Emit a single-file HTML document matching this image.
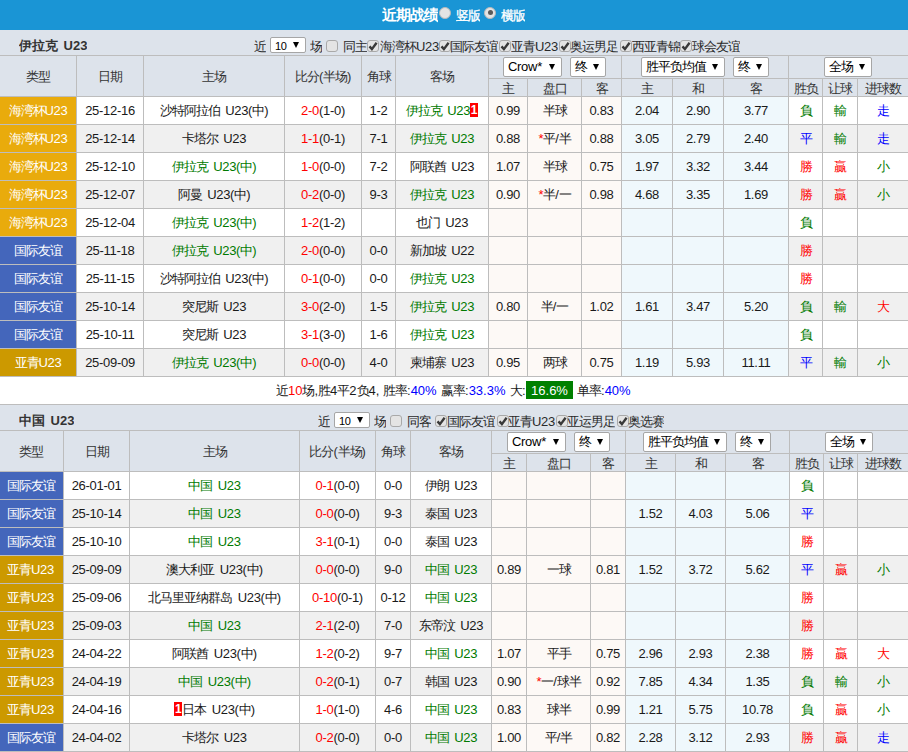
<!DOCTYPE html>
<html><head><meta charset="utf-8"><style>
html,body{margin:0;padding:0;}
body{width:908px;height:752px;overflow:hidden;position:relative;background:#fff;font-family:"Liberation Sans",sans-serif;font-size:13px;letter-spacing:-0.3px;word-spacing:2px;color:#1a1a1a;}
.c{letter-spacing:-1px}
.nt .c{letter-spacing:0}
.hd{padding-top:1px;box-sizing:border-box}
body>div{position:absolute;white-space:nowrap;overflow:hidden;}
.arr{position:absolute;width:0;height:0;border-left:3px solid transparent;border-right:3px solid transparent;border-top:6px solid #000}
.ck{font-size:10px;line-height:9px;display:block;text-align:center;color:#333}
.rc{background:#f00;color:#fff;font-weight:bold;display:inline-block;width:8px;height:14px;line-height:14px;text-align:center;vertical-align:1px;font-size:12px;letter-spacing:0}
.bl{color:#00f}
.gb{background:#008000;color:#fff;font-size:13px;padding:1px 4px;display:inline-block;line-height:17px}
</style></head><body>
<div style="left:0px;top:0px;width:908px;height:30px;background:#1a95d5"></div>
<div style="left:382px;top:6px;color:#fff;font-weight:bold;font-size:15px;line-height:18px"><span class="c">近期战绩</span></div>
<div style="left:439px;top:7px;width:12px;height:12px;border-radius:50%;border:1px solid #b9b9b9;box-sizing:border-box;background:#e4e4e4"></div>
<div style="left:456px;top:7px;color:#fff;font-size:13px;line-height:18px;-webkit-text-stroke:0.35px #fff"><span class="c">竖版</span></div>
<div style="left:484px;top:7px;width:12px;height:12px;border-radius:50%;border:1px solid #b9b9b9;box-sizing:border-box;background:#e4e4e4"><div style="position:absolute;left:3px;top:2px;width:5px;height:5px;border-radius:50%;background:#5a5a5a"></div></div>
<div style="left:501px;top:7px;color:#fff;font-size:13px;line-height:18px;-webkit-text-stroke:0.35px #fff"><span class="c">横版</span></div>
<div style="left:0px;top:30px;width:908px;height:25px;background:#dde3eb"></div>
<div style="left:0px;top:55px;width:908px;height:41px;background:#dde3eb"></div>
<div style="left:0px;top:55px;width:908px;height:1px;background:#bdbdbd"></div>
<div style="left:0px;top:96px;width:908px;height:1px;background:#bdbdbd"></div>
<div style="left:0px;top:56px;width:76px;height:40px;line-height:42px;text-align:center;color:#333"><span class="c">类型</span></div>
<div style="left:76px;top:55px;width:1px;height:41px;background:#bdbdbd"></div>
<div style="left:77px;top:56px;width:66px;height:40px;line-height:42px;text-align:center;color:#333"><span class="c">日期</span></div>
<div style="left:143px;top:55px;width:1px;height:41px;background:#bdbdbd"></div>
<div style="left:144px;top:56px;width:140px;height:40px;line-height:42px;text-align:center;color:#333"><span class="c">主场</span></div>
<div style="left:284px;top:55px;width:1px;height:41px;background:#bdbdbd"></div>
<div style="left:285px;top:56px;width:76px;height:40px;line-height:42px;text-align:center;color:#333"><span class="c">比分</span>(<span class="c">半场</span>)</div>
<div style="left:361px;top:55px;width:1px;height:41px;background:#bdbdbd"></div>
<div style="left:362px;top:56px;width:33px;height:40px;line-height:42px;text-align:center;color:#333"><span class="c">角球</span></div>
<div style="left:395px;top:55px;width:1px;height:41px;background:#bdbdbd"></div>
<div style="left:396px;top:56px;width:92px;height:40px;line-height:42px;text-align:center;color:#333"><span class="c">客场</span></div>
<div style="left:488px;top:55px;width:1px;height:41px;background:#bdbdbd"></div>
<div style="left:488px;top:78px;width:420px;height:1px;background:#bdbdbd"></div>
<div style="left:621px;top:55px;width:1px;height:41px;background:#bdbdbd"></div>
<div style="left:788px;top:55px;width:1px;height:41px;background:#bdbdbd"></div>
<div style="left:489px;top:79px;width:38px;height:17px;line-height:19px;text-align:center;color:#333"><span class="c">主</span></div>
<div style="left:527px;top:78px;width:1px;height:18px;background:#bdbdbd"></div>
<div style="left:528px;top:79px;width:53px;height:17px;line-height:19px;text-align:center;color:#333"><span class="c">盘口</span></div>
<div style="left:581px;top:78px;width:1px;height:18px;background:#bdbdbd"></div>
<div style="left:582px;top:79px;width:39px;height:17px;line-height:19px;text-align:center;color:#333"><span class="c">客</span></div>
<div style="left:621px;top:78px;width:1px;height:18px;background:#bdbdbd"></div>
<div style="left:622px;top:79px;width:50px;height:17px;line-height:19px;text-align:center;color:#333"><span class="c">主</span></div>
<div style="left:672px;top:78px;width:1px;height:18px;background:#bdbdbd"></div>
<div style="left:673px;top:79px;width:50px;height:17px;line-height:19px;text-align:center;color:#333"><span class="c">和</span></div>
<div style="left:723px;top:78px;width:1px;height:18px;background:#bdbdbd"></div>
<div style="left:724px;top:79px;width:64px;height:17px;line-height:19px;text-align:center;color:#333"><span class="c">客</span></div>
<div style="left:788px;top:78px;width:1px;height:18px;background:#bdbdbd"></div>
<div style="left:789px;top:79px;width:33px;height:17px;line-height:19px;text-align:center;color:#333"><span class="c">胜负</span></div>
<div style="left:822px;top:78px;width:1px;height:18px;background:#bdbdbd"></div>
<div style="left:823px;top:79px;width:34px;height:17px;line-height:19px;text-align:center;color:#333"><span class="c">让球</span></div>
<div style="left:857px;top:78px;width:1px;height:18px;background:#bdbdbd"></div>
<div style="left:858px;top:79px;width:50px;height:17px;line-height:19px;text-align:center;color:#333"><span class="c">进球数</span></div>
<div style="left:0px;top:97px;width:76px;height:27px;background:#e9ab0c;line-height:27px;text-align:center;color:#fff;"><span class="c">海湾杯</span>U23</div>
<div style="left:76px;top:96px;width:1px;height:28px;background:#bdbdbd"></div>
<div style="left:77px;top:97px;width:66px;height:27px;background:#fff;line-height:27px;text-align:center;color:#1a1a1a;">25-12-16</div>
<div style="left:143px;top:96px;width:1px;height:28px;background:#bdbdbd"></div>
<div style="left:144px;top:97px;width:140px;height:27px;background:#fff;line-height:27px;text-align:center;color:#1a1a1a;"><span class="c">沙特阿拉伯</span> U23(<span class="c">中</span>)</div>
<div style="left:284px;top:96px;width:1px;height:28px;background:#bdbdbd"></div>
<div style="left:285px;top:97px;width:76px;height:27px;background:#fff;line-height:27px;text-align:center;color:#1a1a1a;"><span style="color:#ff0000">2-0</span>(1-0)</div>
<div style="left:361px;top:96px;width:1px;height:28px;background:#bdbdbd"></div>
<div style="left:362px;top:97px;width:33px;height:27px;background:#fff;line-height:27px;text-align:center;color:#1a1a1a;">1-2</div>
<div style="left:395px;top:96px;width:1px;height:28px;background:#bdbdbd"></div>
<div style="left:396px;top:97px;width:92px;height:27px;background:#fff;line-height:27px;text-align:center;color:#007a00;"><span class="c">伊拉克</span> U23<b class="rc">1</b></div>
<div style="left:488px;top:96px;width:1px;height:28px;background:#bdbdbd"></div>
<div style="left:489px;top:97px;width:38px;height:27px;background:#fdf9f6;line-height:27px;text-align:center;color:#1a1a1a;">0.99</div>
<div style="left:527px;top:96px;width:1px;height:28px;background:#bdbdbd"></div>
<div style="left:528px;top:97px;width:53px;height:27px;background:#fdf9f6;line-height:27px;text-align:center;color:#1a1a1a;"><span class="c">半球</span></div>
<div style="left:581px;top:96px;width:1px;height:28px;background:#bdbdbd"></div>
<div style="left:582px;top:97px;width:39px;height:27px;background:#fdf9f6;line-height:27px;text-align:center;color:#1a1a1a;">0.83</div>
<div style="left:621px;top:96px;width:1px;height:28px;background:#bdbdbd"></div>
<div style="left:622px;top:97px;width:50px;height:27px;background:#eff8fc;line-height:27px;text-align:center;color:#1a1a1a;">2.04</div>
<div style="left:672px;top:96px;width:1px;height:28px;background:#bdbdbd"></div>
<div style="left:673px;top:97px;width:50px;height:27px;background:#eff8fc;line-height:27px;text-align:center;color:#1a1a1a;">2.90</div>
<div style="left:723px;top:96px;width:1px;height:28px;background:#bdbdbd"></div>
<div style="left:724px;top:97px;width:64px;height:27px;background:#eff8fc;line-height:27px;text-align:center;color:#1a1a1a;">3.77</div>
<div style="left:788px;top:96px;width:1px;height:28px;background:#bdbdbd"></div>
<div style="left:789px;top:97px;width:33px;height:27px;background:#fff;line-height:27px;text-align:center;color:#007a00;"><span class="c">負</span></div>
<div style="left:822px;top:96px;width:1px;height:28px;background:#bdbdbd"></div>
<div style="left:823px;top:97px;width:34px;height:27px;background:#fff;line-height:27px;text-align:center;color:#007a00;"><span class="c">輸</span></div>
<div style="left:857px;top:96px;width:1px;height:28px;background:#bdbdbd"></div>
<div style="left:858px;top:97px;width:50px;height:27px;background:#fff;line-height:27px;text-align:center;color:#0000ff;"><span class="c">走</span></div>
<div style="left:0px;top:124px;width:908px;height:1px;background:#bdbdbd"></div>
<div style="left:0px;top:125px;width:76px;height:27px;background:#e9ab0c;line-height:27px;text-align:center;color:#fff;"><span class="c">海湾杯</span>U23</div>
<div style="left:76px;top:124px;width:1px;height:28px;background:#bdbdbd"></div>
<div style="left:77px;top:125px;width:66px;height:27px;background:#f0f0f0;line-height:27px;text-align:center;color:#1a1a1a;">25-12-14</div>
<div style="left:143px;top:124px;width:1px;height:28px;background:#bdbdbd"></div>
<div style="left:144px;top:125px;width:140px;height:27px;background:#f0f0f0;line-height:27px;text-align:center;color:#1a1a1a;"><span class="c">卡塔尔</span> U23</div>
<div style="left:284px;top:124px;width:1px;height:28px;background:#bdbdbd"></div>
<div style="left:285px;top:125px;width:76px;height:27px;background:#f0f0f0;line-height:27px;text-align:center;color:#1a1a1a;"><span style="color:#ff0000">1-1</span>(0-1)</div>
<div style="left:361px;top:124px;width:1px;height:28px;background:#bdbdbd"></div>
<div style="left:362px;top:125px;width:33px;height:27px;background:#f0f0f0;line-height:27px;text-align:center;color:#1a1a1a;">7-1</div>
<div style="left:395px;top:124px;width:1px;height:28px;background:#bdbdbd"></div>
<div style="left:396px;top:125px;width:92px;height:27px;background:#f0f0f0;line-height:27px;text-align:center;color:#007a00;"><span class="c">伊拉克</span> U23</div>
<div style="left:488px;top:124px;width:1px;height:28px;background:#bdbdbd"></div>
<div style="left:489px;top:125px;width:38px;height:27px;background:#fdf9f6;line-height:27px;text-align:center;color:#1a1a1a;">0.88</div>
<div style="left:527px;top:124px;width:1px;height:28px;background:#bdbdbd"></div>
<div style="left:528px;top:125px;width:53px;height:27px;background:#fdf9f6;line-height:27px;text-align:center;color:#1a1a1a;"><span style="color:#ff0000">*</span><span class="c">平</span>/<span class="c">半</span></div>
<div style="left:581px;top:124px;width:1px;height:28px;background:#bdbdbd"></div>
<div style="left:582px;top:125px;width:39px;height:27px;background:#fdf9f6;line-height:27px;text-align:center;color:#1a1a1a;">0.88</div>
<div style="left:621px;top:124px;width:1px;height:28px;background:#bdbdbd"></div>
<div style="left:622px;top:125px;width:50px;height:27px;background:#eff8fc;line-height:27px;text-align:center;color:#1a1a1a;">3.05</div>
<div style="left:672px;top:124px;width:1px;height:28px;background:#bdbdbd"></div>
<div style="left:673px;top:125px;width:50px;height:27px;background:#eff8fc;line-height:27px;text-align:center;color:#1a1a1a;">2.79</div>
<div style="left:723px;top:124px;width:1px;height:28px;background:#bdbdbd"></div>
<div style="left:724px;top:125px;width:64px;height:27px;background:#eff8fc;line-height:27px;text-align:center;color:#1a1a1a;">2.40</div>
<div style="left:788px;top:124px;width:1px;height:28px;background:#bdbdbd"></div>
<div style="left:789px;top:125px;width:33px;height:27px;background:#f0f0f0;line-height:27px;text-align:center;color:#0000ff;"><span class="c">平</span></div>
<div style="left:822px;top:124px;width:1px;height:28px;background:#bdbdbd"></div>
<div style="left:823px;top:125px;width:34px;height:27px;background:#f0f0f0;line-height:27px;text-align:center;color:#007a00;"><span class="c">輸</span></div>
<div style="left:857px;top:124px;width:1px;height:28px;background:#bdbdbd"></div>
<div style="left:858px;top:125px;width:50px;height:27px;background:#f0f0f0;line-height:27px;text-align:center;color:#0000ff;"><span class="c">走</span></div>
<div style="left:0px;top:152px;width:908px;height:1px;background:#bdbdbd"></div>
<div style="left:0px;top:153px;width:76px;height:27px;background:#e9ab0c;line-height:27px;text-align:center;color:#fff;"><span class="c">海湾杯</span>U23</div>
<div style="left:76px;top:152px;width:1px;height:28px;background:#bdbdbd"></div>
<div style="left:77px;top:153px;width:66px;height:27px;background:#fff;line-height:27px;text-align:center;color:#1a1a1a;">25-12-10</div>
<div style="left:143px;top:152px;width:1px;height:28px;background:#bdbdbd"></div>
<div style="left:144px;top:153px;width:140px;height:27px;background:#fff;line-height:27px;text-align:center;color:#007a00;"><span class="c">伊拉克</span> U23(<span class="c">中</span>)</div>
<div style="left:284px;top:152px;width:1px;height:28px;background:#bdbdbd"></div>
<div style="left:285px;top:153px;width:76px;height:27px;background:#fff;line-height:27px;text-align:center;color:#1a1a1a;"><span style="color:#ff0000">1-0</span>(0-0)</div>
<div style="left:361px;top:152px;width:1px;height:28px;background:#bdbdbd"></div>
<div style="left:362px;top:153px;width:33px;height:27px;background:#fff;line-height:27px;text-align:center;color:#1a1a1a;">7-2</div>
<div style="left:395px;top:152px;width:1px;height:28px;background:#bdbdbd"></div>
<div style="left:396px;top:153px;width:92px;height:27px;background:#fff;line-height:27px;text-align:center;color:#1a1a1a;"><span class="c">阿联酋</span> U23</div>
<div style="left:488px;top:152px;width:1px;height:28px;background:#bdbdbd"></div>
<div style="left:489px;top:153px;width:38px;height:27px;background:#fdf9f6;line-height:27px;text-align:center;color:#1a1a1a;">1.07</div>
<div style="left:527px;top:152px;width:1px;height:28px;background:#bdbdbd"></div>
<div style="left:528px;top:153px;width:53px;height:27px;background:#fdf9f6;line-height:27px;text-align:center;color:#1a1a1a;"><span class="c">半球</span></div>
<div style="left:581px;top:152px;width:1px;height:28px;background:#bdbdbd"></div>
<div style="left:582px;top:153px;width:39px;height:27px;background:#fdf9f6;line-height:27px;text-align:center;color:#1a1a1a;">0.75</div>
<div style="left:621px;top:152px;width:1px;height:28px;background:#bdbdbd"></div>
<div style="left:622px;top:153px;width:50px;height:27px;background:#eff8fc;line-height:27px;text-align:center;color:#1a1a1a;">1.97</div>
<div style="left:672px;top:152px;width:1px;height:28px;background:#bdbdbd"></div>
<div style="left:673px;top:153px;width:50px;height:27px;background:#eff8fc;line-height:27px;text-align:center;color:#1a1a1a;">3.32</div>
<div style="left:723px;top:152px;width:1px;height:28px;background:#bdbdbd"></div>
<div style="left:724px;top:153px;width:64px;height:27px;background:#eff8fc;line-height:27px;text-align:center;color:#1a1a1a;">3.44</div>
<div style="left:788px;top:152px;width:1px;height:28px;background:#bdbdbd"></div>
<div style="left:789px;top:153px;width:33px;height:27px;background:#fff;line-height:27px;text-align:center;color:#ff0000;"><span class="c">勝</span></div>
<div style="left:822px;top:152px;width:1px;height:28px;background:#bdbdbd"></div>
<div style="left:823px;top:153px;width:34px;height:27px;background:#fff;line-height:27px;text-align:center;color:#ff0000;"><span class="c">贏</span></div>
<div style="left:857px;top:152px;width:1px;height:28px;background:#bdbdbd"></div>
<div style="left:858px;top:153px;width:50px;height:27px;background:#fff;line-height:27px;text-align:center;color:#007a00;"><span class="c">小</span></div>
<div style="left:0px;top:180px;width:908px;height:1px;background:#bdbdbd"></div>
<div style="left:0px;top:181px;width:76px;height:27px;background:#e9ab0c;line-height:27px;text-align:center;color:#fff;"><span class="c">海湾杯</span>U23</div>
<div style="left:76px;top:180px;width:1px;height:28px;background:#bdbdbd"></div>
<div style="left:77px;top:181px;width:66px;height:27px;background:#f0f0f0;line-height:27px;text-align:center;color:#1a1a1a;">25-12-07</div>
<div style="left:143px;top:180px;width:1px;height:28px;background:#bdbdbd"></div>
<div style="left:144px;top:181px;width:140px;height:27px;background:#f0f0f0;line-height:27px;text-align:center;color:#1a1a1a;"><span class="c">阿曼</span> U23(<span class="c">中</span>)</div>
<div style="left:284px;top:180px;width:1px;height:28px;background:#bdbdbd"></div>
<div style="left:285px;top:181px;width:76px;height:27px;background:#f0f0f0;line-height:27px;text-align:center;color:#1a1a1a;"><span style="color:#ff0000">0-2</span>(0-0)</div>
<div style="left:361px;top:180px;width:1px;height:28px;background:#bdbdbd"></div>
<div style="left:362px;top:181px;width:33px;height:27px;background:#f0f0f0;line-height:27px;text-align:center;color:#1a1a1a;">9-3</div>
<div style="left:395px;top:180px;width:1px;height:28px;background:#bdbdbd"></div>
<div style="left:396px;top:181px;width:92px;height:27px;background:#f0f0f0;line-height:27px;text-align:center;color:#007a00;"><span class="c">伊拉克</span> U23</div>
<div style="left:488px;top:180px;width:1px;height:28px;background:#bdbdbd"></div>
<div style="left:489px;top:181px;width:38px;height:27px;background:#fdf9f6;line-height:27px;text-align:center;color:#1a1a1a;">0.90</div>
<div style="left:527px;top:180px;width:1px;height:28px;background:#bdbdbd"></div>
<div style="left:528px;top:181px;width:53px;height:27px;background:#fdf9f6;line-height:27px;text-align:center;color:#1a1a1a;"><span style="color:#ff0000">*</span><span class="c">半</span>/<span class="c">一</span></div>
<div style="left:581px;top:180px;width:1px;height:28px;background:#bdbdbd"></div>
<div style="left:582px;top:181px;width:39px;height:27px;background:#fdf9f6;line-height:27px;text-align:center;color:#1a1a1a;">0.98</div>
<div style="left:621px;top:180px;width:1px;height:28px;background:#bdbdbd"></div>
<div style="left:622px;top:181px;width:50px;height:27px;background:#eff8fc;line-height:27px;text-align:center;color:#1a1a1a;">4.68</div>
<div style="left:672px;top:180px;width:1px;height:28px;background:#bdbdbd"></div>
<div style="left:673px;top:181px;width:50px;height:27px;background:#eff8fc;line-height:27px;text-align:center;color:#1a1a1a;">3.35</div>
<div style="left:723px;top:180px;width:1px;height:28px;background:#bdbdbd"></div>
<div style="left:724px;top:181px;width:64px;height:27px;background:#eff8fc;line-height:27px;text-align:center;color:#1a1a1a;">1.69</div>
<div style="left:788px;top:180px;width:1px;height:28px;background:#bdbdbd"></div>
<div style="left:789px;top:181px;width:33px;height:27px;background:#f0f0f0;line-height:27px;text-align:center;color:#ff0000;"><span class="c">勝</span></div>
<div style="left:822px;top:180px;width:1px;height:28px;background:#bdbdbd"></div>
<div style="left:823px;top:181px;width:34px;height:27px;background:#f0f0f0;line-height:27px;text-align:center;color:#ff0000;"><span class="c">贏</span></div>
<div style="left:857px;top:180px;width:1px;height:28px;background:#bdbdbd"></div>
<div style="left:858px;top:181px;width:50px;height:27px;background:#f0f0f0;line-height:27px;text-align:center;color:#007a00;"><span class="c">小</span></div>
<div style="left:0px;top:208px;width:908px;height:1px;background:#bdbdbd"></div>
<div style="left:0px;top:209px;width:76px;height:27px;background:#e9ab0c;line-height:27px;text-align:center;color:#fff;"><span class="c">海湾杯</span>U23</div>
<div style="left:76px;top:208px;width:1px;height:28px;background:#bdbdbd"></div>
<div style="left:77px;top:209px;width:66px;height:27px;background:#fff;line-height:27px;text-align:center;color:#1a1a1a;">25-12-04</div>
<div style="left:143px;top:208px;width:1px;height:28px;background:#bdbdbd"></div>
<div style="left:144px;top:209px;width:140px;height:27px;background:#fff;line-height:27px;text-align:center;color:#007a00;"><span class="c">伊拉克</span> U23(<span class="c">中</span>)</div>
<div style="left:284px;top:208px;width:1px;height:28px;background:#bdbdbd"></div>
<div style="left:285px;top:209px;width:76px;height:27px;background:#fff;line-height:27px;text-align:center;color:#1a1a1a;"><span style="color:#ff0000">1-2</span>(1-2)</div>
<div style="left:361px;top:208px;width:1px;height:28px;background:#bdbdbd"></div>
<div style="left:362px;top:209px;width:33px;height:27px;background:#fff;line-height:27px;text-align:center;color:#1a1a1a;"></div>
<div style="left:395px;top:208px;width:1px;height:28px;background:#bdbdbd"></div>
<div style="left:396px;top:209px;width:92px;height:27px;background:#fff;line-height:27px;text-align:center;color:#1a1a1a;"><span class="c">也门</span> U23</div>
<div style="left:488px;top:208px;width:1px;height:28px;background:#bdbdbd"></div>
<div style="left:489px;top:209px;width:38px;height:27px;background:#fdf9f6;line-height:27px;text-align:center;color:#1a1a1a;"></div>
<div style="left:527px;top:208px;width:1px;height:28px;background:#bdbdbd"></div>
<div style="left:528px;top:209px;width:53px;height:27px;background:#fdf9f6;line-height:27px;text-align:center;color:#1a1a1a;"></div>
<div style="left:581px;top:208px;width:1px;height:28px;background:#bdbdbd"></div>
<div style="left:582px;top:209px;width:39px;height:27px;background:#fdf9f6;line-height:27px;text-align:center;color:#1a1a1a;"></div>
<div style="left:621px;top:208px;width:1px;height:28px;background:#bdbdbd"></div>
<div style="left:622px;top:209px;width:50px;height:27px;background:#eff8fc;line-height:27px;text-align:center;color:#1a1a1a;"></div>
<div style="left:672px;top:208px;width:1px;height:28px;background:#bdbdbd"></div>
<div style="left:673px;top:209px;width:50px;height:27px;background:#eff8fc;line-height:27px;text-align:center;color:#1a1a1a;"></div>
<div style="left:723px;top:208px;width:1px;height:28px;background:#bdbdbd"></div>
<div style="left:724px;top:209px;width:64px;height:27px;background:#eff8fc;line-height:27px;text-align:center;color:#1a1a1a;"></div>
<div style="left:788px;top:208px;width:1px;height:28px;background:#bdbdbd"></div>
<div style="left:789px;top:209px;width:33px;height:27px;background:#fff;line-height:27px;text-align:center;color:#007a00;"><span class="c">負</span></div>
<div style="left:822px;top:208px;width:1px;height:28px;background:#bdbdbd"></div>
<div style="left:823px;top:209px;width:34px;height:27px;background:#fff;line-height:27px;text-align:center;color:#1a1a1a;"></div>
<div style="left:857px;top:208px;width:1px;height:28px;background:#bdbdbd"></div>
<div style="left:858px;top:209px;width:50px;height:27px;background:#fff;line-height:27px;text-align:center;color:#1a1a1a;"></div>
<div style="left:0px;top:236px;width:908px;height:1px;background:#bdbdbd"></div>
<div style="left:0px;top:237px;width:76px;height:27px;background:#4466bb;line-height:27px;text-align:center;color:#fff;"><span class="c">国际友谊</span></div>
<div style="left:76px;top:236px;width:1px;height:28px;background:#bdbdbd"></div>
<div style="left:77px;top:237px;width:66px;height:27px;background:#f0f0f0;line-height:27px;text-align:center;color:#1a1a1a;">25-11-18</div>
<div style="left:143px;top:236px;width:1px;height:28px;background:#bdbdbd"></div>
<div style="left:144px;top:237px;width:140px;height:27px;background:#f0f0f0;line-height:27px;text-align:center;color:#007a00;"><span class="c">伊拉克</span> U23(<span class="c">中</span>)</div>
<div style="left:284px;top:236px;width:1px;height:28px;background:#bdbdbd"></div>
<div style="left:285px;top:237px;width:76px;height:27px;background:#f0f0f0;line-height:27px;text-align:center;color:#1a1a1a;"><span style="color:#ff0000">2-0</span>(0-0)</div>
<div style="left:361px;top:236px;width:1px;height:28px;background:#bdbdbd"></div>
<div style="left:362px;top:237px;width:33px;height:27px;background:#f0f0f0;line-height:27px;text-align:center;color:#1a1a1a;">0-0</div>
<div style="left:395px;top:236px;width:1px;height:28px;background:#bdbdbd"></div>
<div style="left:396px;top:237px;width:92px;height:27px;background:#f0f0f0;line-height:27px;text-align:center;color:#1a1a1a;"><span class="c">新加坡</span> U22</div>
<div style="left:488px;top:236px;width:1px;height:28px;background:#bdbdbd"></div>
<div style="left:489px;top:237px;width:38px;height:27px;background:#fdf9f6;line-height:27px;text-align:center;color:#1a1a1a;"></div>
<div style="left:527px;top:236px;width:1px;height:28px;background:#bdbdbd"></div>
<div style="left:528px;top:237px;width:53px;height:27px;background:#fdf9f6;line-height:27px;text-align:center;color:#1a1a1a;"></div>
<div style="left:581px;top:236px;width:1px;height:28px;background:#bdbdbd"></div>
<div style="left:582px;top:237px;width:39px;height:27px;background:#fdf9f6;line-height:27px;text-align:center;color:#1a1a1a;"></div>
<div style="left:621px;top:236px;width:1px;height:28px;background:#bdbdbd"></div>
<div style="left:622px;top:237px;width:50px;height:27px;background:#eff8fc;line-height:27px;text-align:center;color:#1a1a1a;"></div>
<div style="left:672px;top:236px;width:1px;height:28px;background:#bdbdbd"></div>
<div style="left:673px;top:237px;width:50px;height:27px;background:#eff8fc;line-height:27px;text-align:center;color:#1a1a1a;"></div>
<div style="left:723px;top:236px;width:1px;height:28px;background:#bdbdbd"></div>
<div style="left:724px;top:237px;width:64px;height:27px;background:#eff8fc;line-height:27px;text-align:center;color:#1a1a1a;"></div>
<div style="left:788px;top:236px;width:1px;height:28px;background:#bdbdbd"></div>
<div style="left:789px;top:237px;width:33px;height:27px;background:#f0f0f0;line-height:27px;text-align:center;color:#ff0000;"><span class="c">勝</span></div>
<div style="left:822px;top:236px;width:1px;height:28px;background:#bdbdbd"></div>
<div style="left:823px;top:237px;width:34px;height:27px;background:#f0f0f0;line-height:27px;text-align:center;color:#1a1a1a;"></div>
<div style="left:857px;top:236px;width:1px;height:28px;background:#bdbdbd"></div>
<div style="left:858px;top:237px;width:50px;height:27px;background:#f0f0f0;line-height:27px;text-align:center;color:#1a1a1a;"></div>
<div style="left:0px;top:264px;width:908px;height:1px;background:#bdbdbd"></div>
<div style="left:0px;top:265px;width:76px;height:27px;background:#4466bb;line-height:27px;text-align:center;color:#fff;"><span class="c">国际友谊</span></div>
<div style="left:76px;top:264px;width:1px;height:28px;background:#bdbdbd"></div>
<div style="left:77px;top:265px;width:66px;height:27px;background:#fff;line-height:27px;text-align:center;color:#1a1a1a;">25-11-15</div>
<div style="left:143px;top:264px;width:1px;height:28px;background:#bdbdbd"></div>
<div style="left:144px;top:265px;width:140px;height:27px;background:#fff;line-height:27px;text-align:center;color:#1a1a1a;"><span class="c">沙特阿拉伯</span> U23(<span class="c">中</span>)</div>
<div style="left:284px;top:264px;width:1px;height:28px;background:#bdbdbd"></div>
<div style="left:285px;top:265px;width:76px;height:27px;background:#fff;line-height:27px;text-align:center;color:#1a1a1a;"><span style="color:#ff0000">0-1</span>(0-0)</div>
<div style="left:361px;top:264px;width:1px;height:28px;background:#bdbdbd"></div>
<div style="left:362px;top:265px;width:33px;height:27px;background:#fff;line-height:27px;text-align:center;color:#1a1a1a;">0-0</div>
<div style="left:395px;top:264px;width:1px;height:28px;background:#bdbdbd"></div>
<div style="left:396px;top:265px;width:92px;height:27px;background:#fff;line-height:27px;text-align:center;color:#007a00;"><span class="c">伊拉克</span> U23</div>
<div style="left:488px;top:264px;width:1px;height:28px;background:#bdbdbd"></div>
<div style="left:489px;top:265px;width:38px;height:27px;background:#fdf9f6;line-height:27px;text-align:center;color:#1a1a1a;"></div>
<div style="left:527px;top:264px;width:1px;height:28px;background:#bdbdbd"></div>
<div style="left:528px;top:265px;width:53px;height:27px;background:#fdf9f6;line-height:27px;text-align:center;color:#1a1a1a;"></div>
<div style="left:581px;top:264px;width:1px;height:28px;background:#bdbdbd"></div>
<div style="left:582px;top:265px;width:39px;height:27px;background:#fdf9f6;line-height:27px;text-align:center;color:#1a1a1a;"></div>
<div style="left:621px;top:264px;width:1px;height:28px;background:#bdbdbd"></div>
<div style="left:622px;top:265px;width:50px;height:27px;background:#eff8fc;line-height:27px;text-align:center;color:#1a1a1a;"></div>
<div style="left:672px;top:264px;width:1px;height:28px;background:#bdbdbd"></div>
<div style="left:673px;top:265px;width:50px;height:27px;background:#eff8fc;line-height:27px;text-align:center;color:#1a1a1a;"></div>
<div style="left:723px;top:264px;width:1px;height:28px;background:#bdbdbd"></div>
<div style="left:724px;top:265px;width:64px;height:27px;background:#eff8fc;line-height:27px;text-align:center;color:#1a1a1a;"></div>
<div style="left:788px;top:264px;width:1px;height:28px;background:#bdbdbd"></div>
<div style="left:789px;top:265px;width:33px;height:27px;background:#fff;line-height:27px;text-align:center;color:#ff0000;"><span class="c">勝</span></div>
<div style="left:822px;top:264px;width:1px;height:28px;background:#bdbdbd"></div>
<div style="left:823px;top:265px;width:34px;height:27px;background:#fff;line-height:27px;text-align:center;color:#1a1a1a;"></div>
<div style="left:857px;top:264px;width:1px;height:28px;background:#bdbdbd"></div>
<div style="left:858px;top:265px;width:50px;height:27px;background:#fff;line-height:27px;text-align:center;color:#1a1a1a;"></div>
<div style="left:0px;top:292px;width:908px;height:1px;background:#bdbdbd"></div>
<div style="left:0px;top:293px;width:76px;height:27px;background:#4466bb;line-height:27px;text-align:center;color:#fff;"><span class="c">国际友谊</span></div>
<div style="left:76px;top:292px;width:1px;height:28px;background:#bdbdbd"></div>
<div style="left:77px;top:293px;width:66px;height:27px;background:#f0f0f0;line-height:27px;text-align:center;color:#1a1a1a;">25-10-14</div>
<div style="left:143px;top:292px;width:1px;height:28px;background:#bdbdbd"></div>
<div style="left:144px;top:293px;width:140px;height:27px;background:#f0f0f0;line-height:27px;text-align:center;color:#1a1a1a;"><span class="c">突尼斯</span> U23</div>
<div style="left:284px;top:292px;width:1px;height:28px;background:#bdbdbd"></div>
<div style="left:285px;top:293px;width:76px;height:27px;background:#f0f0f0;line-height:27px;text-align:center;color:#1a1a1a;"><span style="color:#ff0000">3-0</span>(2-0)</div>
<div style="left:361px;top:292px;width:1px;height:28px;background:#bdbdbd"></div>
<div style="left:362px;top:293px;width:33px;height:27px;background:#f0f0f0;line-height:27px;text-align:center;color:#1a1a1a;">1-5</div>
<div style="left:395px;top:292px;width:1px;height:28px;background:#bdbdbd"></div>
<div style="left:396px;top:293px;width:92px;height:27px;background:#f0f0f0;line-height:27px;text-align:center;color:#007a00;"><span class="c">伊拉克</span> U23</div>
<div style="left:488px;top:292px;width:1px;height:28px;background:#bdbdbd"></div>
<div style="left:489px;top:293px;width:38px;height:27px;background:#fdf9f6;line-height:27px;text-align:center;color:#1a1a1a;">0.80</div>
<div style="left:527px;top:292px;width:1px;height:28px;background:#bdbdbd"></div>
<div style="left:528px;top:293px;width:53px;height:27px;background:#fdf9f6;line-height:27px;text-align:center;color:#1a1a1a;"><span class="c">半</span>/<span class="c">一</span></div>
<div style="left:581px;top:292px;width:1px;height:28px;background:#bdbdbd"></div>
<div style="left:582px;top:293px;width:39px;height:27px;background:#fdf9f6;line-height:27px;text-align:center;color:#1a1a1a;">1.02</div>
<div style="left:621px;top:292px;width:1px;height:28px;background:#bdbdbd"></div>
<div style="left:622px;top:293px;width:50px;height:27px;background:#eff8fc;line-height:27px;text-align:center;color:#1a1a1a;">1.61</div>
<div style="left:672px;top:292px;width:1px;height:28px;background:#bdbdbd"></div>
<div style="left:673px;top:293px;width:50px;height:27px;background:#eff8fc;line-height:27px;text-align:center;color:#1a1a1a;">3.47</div>
<div style="left:723px;top:292px;width:1px;height:28px;background:#bdbdbd"></div>
<div style="left:724px;top:293px;width:64px;height:27px;background:#eff8fc;line-height:27px;text-align:center;color:#1a1a1a;">5.20</div>
<div style="left:788px;top:292px;width:1px;height:28px;background:#bdbdbd"></div>
<div style="left:789px;top:293px;width:33px;height:27px;background:#f0f0f0;line-height:27px;text-align:center;color:#007a00;"><span class="c">負</span></div>
<div style="left:822px;top:292px;width:1px;height:28px;background:#bdbdbd"></div>
<div style="left:823px;top:293px;width:34px;height:27px;background:#f0f0f0;line-height:27px;text-align:center;color:#007a00;"><span class="c">輸</span></div>
<div style="left:857px;top:292px;width:1px;height:28px;background:#bdbdbd"></div>
<div style="left:858px;top:293px;width:50px;height:27px;background:#f0f0f0;line-height:27px;text-align:center;color:#ff0000;"><span class="c">大</span></div>
<div style="left:0px;top:320px;width:908px;height:1px;background:#bdbdbd"></div>
<div style="left:0px;top:321px;width:76px;height:27px;background:#4466bb;line-height:27px;text-align:center;color:#fff;"><span class="c">国际友谊</span></div>
<div style="left:76px;top:320px;width:1px;height:28px;background:#bdbdbd"></div>
<div style="left:77px;top:321px;width:66px;height:27px;background:#fff;line-height:27px;text-align:center;color:#1a1a1a;">25-10-11</div>
<div style="left:143px;top:320px;width:1px;height:28px;background:#bdbdbd"></div>
<div style="left:144px;top:321px;width:140px;height:27px;background:#fff;line-height:27px;text-align:center;color:#1a1a1a;"><span class="c">突尼斯</span> U23</div>
<div style="left:284px;top:320px;width:1px;height:28px;background:#bdbdbd"></div>
<div style="left:285px;top:321px;width:76px;height:27px;background:#fff;line-height:27px;text-align:center;color:#1a1a1a;"><span style="color:#ff0000">3-1</span>(3-0)</div>
<div style="left:361px;top:320px;width:1px;height:28px;background:#bdbdbd"></div>
<div style="left:362px;top:321px;width:33px;height:27px;background:#fff;line-height:27px;text-align:center;color:#1a1a1a;">1-6</div>
<div style="left:395px;top:320px;width:1px;height:28px;background:#bdbdbd"></div>
<div style="left:396px;top:321px;width:92px;height:27px;background:#fff;line-height:27px;text-align:center;color:#007a00;"><span class="c">伊拉克</span> U23</div>
<div style="left:488px;top:320px;width:1px;height:28px;background:#bdbdbd"></div>
<div style="left:489px;top:321px;width:38px;height:27px;background:#fdf9f6;line-height:27px;text-align:center;color:#1a1a1a;"></div>
<div style="left:527px;top:320px;width:1px;height:28px;background:#bdbdbd"></div>
<div style="left:528px;top:321px;width:53px;height:27px;background:#fdf9f6;line-height:27px;text-align:center;color:#1a1a1a;"></div>
<div style="left:581px;top:320px;width:1px;height:28px;background:#bdbdbd"></div>
<div style="left:582px;top:321px;width:39px;height:27px;background:#fdf9f6;line-height:27px;text-align:center;color:#1a1a1a;"></div>
<div style="left:621px;top:320px;width:1px;height:28px;background:#bdbdbd"></div>
<div style="left:622px;top:321px;width:50px;height:27px;background:#eff8fc;line-height:27px;text-align:center;color:#1a1a1a;"></div>
<div style="left:672px;top:320px;width:1px;height:28px;background:#bdbdbd"></div>
<div style="left:673px;top:321px;width:50px;height:27px;background:#eff8fc;line-height:27px;text-align:center;color:#1a1a1a;"></div>
<div style="left:723px;top:320px;width:1px;height:28px;background:#bdbdbd"></div>
<div style="left:724px;top:321px;width:64px;height:27px;background:#eff8fc;line-height:27px;text-align:center;color:#1a1a1a;"></div>
<div style="left:788px;top:320px;width:1px;height:28px;background:#bdbdbd"></div>
<div style="left:789px;top:321px;width:33px;height:27px;background:#fff;line-height:27px;text-align:center;color:#007a00;"><span class="c">負</span></div>
<div style="left:822px;top:320px;width:1px;height:28px;background:#bdbdbd"></div>
<div style="left:823px;top:321px;width:34px;height:27px;background:#fff;line-height:27px;text-align:center;color:#1a1a1a;"></div>
<div style="left:857px;top:320px;width:1px;height:28px;background:#bdbdbd"></div>
<div style="left:858px;top:321px;width:50px;height:27px;background:#fff;line-height:27px;text-align:center;color:#1a1a1a;"></div>
<div style="left:0px;top:348px;width:908px;height:1px;background:#bdbdbd"></div>
<div style="left:0px;top:349px;width:76px;height:27px;background:#cc9900;line-height:27px;text-align:center;color:#fff;"><span class="c">亚青</span>U23</div>
<div style="left:76px;top:348px;width:1px;height:28px;background:#bdbdbd"></div>
<div style="left:77px;top:349px;width:66px;height:27px;background:#f0f0f0;line-height:27px;text-align:center;color:#1a1a1a;">25-09-09</div>
<div style="left:143px;top:348px;width:1px;height:28px;background:#bdbdbd"></div>
<div style="left:144px;top:349px;width:140px;height:27px;background:#f0f0f0;line-height:27px;text-align:center;color:#007a00;"><span class="c">伊拉克</span> U23(<span class="c">中</span>)</div>
<div style="left:284px;top:348px;width:1px;height:28px;background:#bdbdbd"></div>
<div style="left:285px;top:349px;width:76px;height:27px;background:#f0f0f0;line-height:27px;text-align:center;color:#1a1a1a;"><span style="color:#ff0000">0-0</span>(0-0)</div>
<div style="left:361px;top:348px;width:1px;height:28px;background:#bdbdbd"></div>
<div style="left:362px;top:349px;width:33px;height:27px;background:#f0f0f0;line-height:27px;text-align:center;color:#1a1a1a;">4-0</div>
<div style="left:395px;top:348px;width:1px;height:28px;background:#bdbdbd"></div>
<div style="left:396px;top:349px;width:92px;height:27px;background:#f0f0f0;line-height:27px;text-align:center;color:#1a1a1a;"><span class="c">柬埔寨</span> U23</div>
<div style="left:488px;top:348px;width:1px;height:28px;background:#bdbdbd"></div>
<div style="left:489px;top:349px;width:38px;height:27px;background:#fdf9f6;line-height:27px;text-align:center;color:#1a1a1a;">0.95</div>
<div style="left:527px;top:348px;width:1px;height:28px;background:#bdbdbd"></div>
<div style="left:528px;top:349px;width:53px;height:27px;background:#fdf9f6;line-height:27px;text-align:center;color:#1a1a1a;"><span class="c">两球</span></div>
<div style="left:581px;top:348px;width:1px;height:28px;background:#bdbdbd"></div>
<div style="left:582px;top:349px;width:39px;height:27px;background:#fdf9f6;line-height:27px;text-align:center;color:#1a1a1a;">0.75</div>
<div style="left:621px;top:348px;width:1px;height:28px;background:#bdbdbd"></div>
<div style="left:622px;top:349px;width:50px;height:27px;background:#eff8fc;line-height:27px;text-align:center;color:#1a1a1a;">1.19</div>
<div style="left:672px;top:348px;width:1px;height:28px;background:#bdbdbd"></div>
<div style="left:673px;top:349px;width:50px;height:27px;background:#eff8fc;line-height:27px;text-align:center;color:#1a1a1a;">5.93</div>
<div style="left:723px;top:348px;width:1px;height:28px;background:#bdbdbd"></div>
<div style="left:724px;top:349px;width:64px;height:27px;background:#eff8fc;line-height:27px;text-align:center;color:#1a1a1a;">11.11</div>
<div style="left:788px;top:348px;width:1px;height:28px;background:#bdbdbd"></div>
<div style="left:789px;top:349px;width:33px;height:27px;background:#f0f0f0;line-height:27px;text-align:center;color:#0000ff;"><span class="c">平</span></div>
<div style="left:822px;top:348px;width:1px;height:28px;background:#bdbdbd"></div>
<div style="left:823px;top:349px;width:34px;height:27px;background:#f0f0f0;line-height:27px;text-align:center;color:#007a00;"><span class="c">輸</span></div>
<div style="left:857px;top:348px;width:1px;height:28px;background:#bdbdbd"></div>
<div style="left:858px;top:349px;width:50px;height:27px;background:#f0f0f0;line-height:27px;text-align:center;color:#007a00;"><span class="c">小</span></div>
<div style="left:0px;top:376px;width:908px;height:1px;background:#bdbdbd"></div>
<div class="nt" style="left:19px;top:38px;font-weight:bold;font-size:13px;line-height:16px;color:#333;letter-spacing:0"><span class="c">伊拉克</span> U23</div>
<div style="left:254px;top:39px;line-height:16px;color:#2a2a2a"><span class="c">近</span></div>
<div style="left:270px;top:37px;width:36px;height:16px;background:#fff;border:1px solid #a6a6a6;border-radius:2px;box-sizing:border-box;line-height:17px;padding-left:4px;font-size:11px;color:#000">10<span class="arr" style="left:22px;top:4px"></span></div>
<div style="left:310px;top:39px;line-height:16px;color:#2a2a2a"><span class="c">场</span></div>
<div style="left:326px;top:40px;width:12px;height:12px;background:#e4e4e4;border:1px solid #a9a9a9;border-radius:3px;box-sizing:border-box;"></div>
<div style="left:343px;top:39px;line-height:16px;color:#2a2a2a"><span class="c">同主</span></div>
<div style="left:367px;top:40px;width:12px;height:12px;background:#e4e4e4;border:1px solid #a9a9a9;border-radius:3px;box-sizing:border-box;"><svg width="10" height="10" style="position:absolute;left:0;top:0"><path d="M1.5 5.4 L3.9 8.1 L8.6 1.8" fill="none" stroke="#3a3a3a" stroke-width="2.4"/></svg></div>
<div style="left:380px;top:39px;line-height:16px;color:#2a2a2a"><span class="c">海湾杯</span>U23</div>
<div style="left:439px;top:40px;width:12px;height:12px;background:#e4e4e4;border:1px solid #a9a9a9;border-radius:3px;box-sizing:border-box;"><svg width="10" height="10" style="position:absolute;left:0;top:0"><path d="M1.5 5.4 L3.9 8.1 L8.6 1.8" fill="none" stroke="#3a3a3a" stroke-width="2.4"/></svg></div>
<div style="left:450px;top:39px;line-height:16px;color:#2a2a2a"><span class="c">国际友谊</span></div>
<div style="left:499px;top:40px;width:12px;height:12px;background:#e4e4e4;border:1px solid #a9a9a9;border-radius:3px;box-sizing:border-box;"><svg width="10" height="10" style="position:absolute;left:0;top:0"><path d="M1.5 5.4 L3.9 8.1 L8.6 1.8" fill="none" stroke="#3a3a3a" stroke-width="2.4"/></svg></div>
<div style="left:511px;top:39px;line-height:16px;color:#2a2a2a"><span class="c">亚青</span>U23</div>
<div style="left:559px;top:40px;width:12px;height:12px;background:#e4e4e4;border:1px solid #a9a9a9;border-radius:3px;box-sizing:border-box;"><svg width="10" height="10" style="position:absolute;left:0;top:0"><path d="M1.5 5.4 L3.9 8.1 L8.6 1.8" fill="none" stroke="#3a3a3a" stroke-width="2.4"/></svg></div>
<div style="left:570px;top:39px;line-height:16px;color:#2a2a2a"><span class="c">奥运男足</span></div>
<div style="left:620px;top:40px;width:12px;height:12px;background:#e4e4e4;border:1px solid #a9a9a9;border-radius:3px;box-sizing:border-box;"><svg width="10" height="10" style="position:absolute;left:0;top:0"><path d="M1.5 5.4 L3.9 8.1 L8.6 1.8" fill="none" stroke="#3a3a3a" stroke-width="2.4"/></svg></div>
<div style="left:632px;top:39px;line-height:16px;color:#2a2a2a"><span class="c">西亚青锦</span></div>
<div style="left:680px;top:40px;width:12px;height:12px;background:#e4e4e4;border:1px solid #a9a9a9;border-radius:3px;box-sizing:border-box;"><svg width="10" height="10" style="position:absolute;left:0;top:0"><path d="M1.5 5.4 L3.9 8.1 L8.6 1.8" fill="none" stroke="#3a3a3a" stroke-width="2.4"/></svg></div>
<div style="left:692px;top:39px;line-height:16px;color:#2a2a2a"><span class="c">球会友谊</span></div>
<div style="left:0px;top:405px;width:908px;height:25px;background:#dde3eb"></div>
<div style="left:0px;top:430px;width:908px;height:41px;background:#dde3eb"></div>
<div style="left:0px;top:430px;width:908px;height:1px;background:#bdbdbd"></div>
<div style="left:0px;top:471px;width:908px;height:1px;background:#bdbdbd"></div>
<div style="left:-2px;top:431px;width:65px;height:40px;line-height:42px;text-align:center;color:#333"><span class="c">类型</span></div>
<div style="left:63px;top:430px;width:1px;height:41px;background:#bdbdbd"></div>
<div style="left:64px;top:431px;width:65px;height:40px;line-height:42px;text-align:center;color:#333"><span class="c">日期</span></div>
<div style="left:129px;top:430px;width:1px;height:41px;background:#bdbdbd"></div>
<div style="left:130px;top:431px;width:169px;height:40px;line-height:42px;text-align:center;color:#333"><span class="c">主场</span></div>
<div style="left:299px;top:430px;width:1px;height:41px;background:#bdbdbd"></div>
<div style="left:300px;top:431px;width:75px;height:40px;line-height:42px;text-align:center;color:#333"><span class="c">比分</span>(<span class="c">半场</span>)</div>
<div style="left:375px;top:430px;width:1px;height:41px;background:#bdbdbd"></div>
<div style="left:376px;top:431px;width:34px;height:40px;line-height:42px;text-align:center;color:#333"><span class="c">角球</span></div>
<div style="left:410px;top:430px;width:1px;height:41px;background:#bdbdbd"></div>
<div style="left:411px;top:431px;width:80px;height:40px;line-height:42px;text-align:center;color:#333"><span class="c">客场</span></div>
<div style="left:491px;top:430px;width:1px;height:41px;background:#bdbdbd"></div>
<div style="left:491px;top:453px;width:417px;height:1px;background:#bdbdbd"></div>
<div style="left:625px;top:430px;width:1px;height:41px;background:#bdbdbd"></div>
<div style="left:789px;top:430px;width:1px;height:41px;background:#bdbdbd"></div>
<div style="left:492px;top:454px;width:34px;height:17px;line-height:19px;text-align:center;color:#333"><span class="c">主</span></div>
<div style="left:526px;top:453px;width:1px;height:18px;background:#bdbdbd"></div>
<div style="left:527px;top:454px;width:63px;height:17px;line-height:19px;text-align:center;color:#333"><span class="c">盘口</span></div>
<div style="left:590px;top:453px;width:1px;height:18px;background:#bdbdbd"></div>
<div style="left:591px;top:454px;width:34px;height:17px;line-height:19px;text-align:center;color:#333"><span class="c">客</span></div>
<div style="left:625px;top:453px;width:1px;height:18px;background:#bdbdbd"></div>
<div style="left:626px;top:454px;width:49px;height:17px;line-height:19px;text-align:center;color:#333"><span class="c">主</span></div>
<div style="left:675px;top:453px;width:1px;height:18px;background:#bdbdbd"></div>
<div style="left:676px;top:454px;width:49px;height:17px;line-height:19px;text-align:center;color:#333"><span class="c">和</span></div>
<div style="left:725px;top:453px;width:1px;height:18px;background:#bdbdbd"></div>
<div style="left:726px;top:454px;width:63px;height:17px;line-height:19px;text-align:center;color:#333"><span class="c">客</span></div>
<div style="left:789px;top:453px;width:1px;height:18px;background:#bdbdbd"></div>
<div style="left:790px;top:454px;width:33px;height:17px;line-height:19px;text-align:center;color:#333"><span class="c">胜负</span></div>
<div style="left:823px;top:453px;width:1px;height:18px;background:#bdbdbd"></div>
<div style="left:824px;top:454px;width:33px;height:17px;line-height:19px;text-align:center;color:#333"><span class="c">让球</span></div>
<div style="left:857px;top:453px;width:1px;height:18px;background:#bdbdbd"></div>
<div style="left:858px;top:454px;width:50px;height:17px;line-height:19px;text-align:center;color:#333"><span class="c">进球数</span></div>
<div style="left:-2px;top:472px;width:65px;height:27px;background:#4466bb;line-height:27px;text-align:center;color:#fff;"><span class="c">国际友谊</span></div>
<div style="left:63px;top:471px;width:1px;height:28px;background:#bdbdbd"></div>
<div style="left:64px;top:472px;width:65px;height:27px;background:#fff;line-height:27px;text-align:center;color:#1a1a1a;">26-01-01</div>
<div style="left:129px;top:471px;width:1px;height:28px;background:#bdbdbd"></div>
<div style="left:130px;top:472px;width:169px;height:27px;background:#fff;line-height:27px;text-align:center;color:#007a00;"><span class="c">中国</span> U23</div>
<div style="left:299px;top:471px;width:1px;height:28px;background:#bdbdbd"></div>
<div style="left:300px;top:472px;width:75px;height:27px;background:#fff;line-height:27px;text-align:center;color:#1a1a1a;"><span style="color:#ff0000">0-1</span>(0-0)</div>
<div style="left:375px;top:471px;width:1px;height:28px;background:#bdbdbd"></div>
<div style="left:376px;top:472px;width:34px;height:27px;background:#fff;line-height:27px;text-align:center;color:#1a1a1a;">0-0</div>
<div style="left:410px;top:471px;width:1px;height:28px;background:#bdbdbd"></div>
<div style="left:411px;top:472px;width:80px;height:27px;background:#fff;line-height:27px;text-align:center;color:#1a1a1a;"><span class="c">伊朗</span> U23</div>
<div style="left:491px;top:471px;width:1px;height:28px;background:#bdbdbd"></div>
<div style="left:492px;top:472px;width:34px;height:27px;background:#fdf9f6;line-height:27px;text-align:center;color:#1a1a1a;"></div>
<div style="left:526px;top:471px;width:1px;height:28px;background:#bdbdbd"></div>
<div style="left:527px;top:472px;width:63px;height:27px;background:#fdf9f6;line-height:27px;text-align:center;color:#1a1a1a;"></div>
<div style="left:590px;top:471px;width:1px;height:28px;background:#bdbdbd"></div>
<div style="left:591px;top:472px;width:34px;height:27px;background:#fdf9f6;line-height:27px;text-align:center;color:#1a1a1a;"></div>
<div style="left:625px;top:471px;width:1px;height:28px;background:#bdbdbd"></div>
<div style="left:626px;top:472px;width:49px;height:27px;background:#eff8fc;line-height:27px;text-align:center;color:#1a1a1a;"></div>
<div style="left:675px;top:471px;width:1px;height:28px;background:#bdbdbd"></div>
<div style="left:676px;top:472px;width:49px;height:27px;background:#eff8fc;line-height:27px;text-align:center;color:#1a1a1a;"></div>
<div style="left:725px;top:471px;width:1px;height:28px;background:#bdbdbd"></div>
<div style="left:726px;top:472px;width:63px;height:27px;background:#eff8fc;line-height:27px;text-align:center;color:#1a1a1a;"></div>
<div style="left:789px;top:471px;width:1px;height:28px;background:#bdbdbd"></div>
<div style="left:790px;top:472px;width:33px;height:27px;background:#fff;line-height:27px;text-align:center;color:#007a00;"><span class="c">負</span></div>
<div style="left:823px;top:471px;width:1px;height:28px;background:#bdbdbd"></div>
<div style="left:824px;top:472px;width:33px;height:27px;background:#fff;line-height:27px;text-align:center;color:#1a1a1a;"></div>
<div style="left:857px;top:471px;width:1px;height:28px;background:#bdbdbd"></div>
<div style="left:858px;top:472px;width:50px;height:27px;background:#fff;line-height:27px;text-align:center;color:#1a1a1a;"></div>
<div style="left:0px;top:499px;width:908px;height:1px;background:#bdbdbd"></div>
<div style="left:-2px;top:500px;width:65px;height:27px;background:#4466bb;line-height:27px;text-align:center;color:#fff;"><span class="c">国际友谊</span></div>
<div style="left:63px;top:499px;width:1px;height:28px;background:#bdbdbd"></div>
<div style="left:64px;top:500px;width:65px;height:27px;background:#f0f0f0;line-height:27px;text-align:center;color:#1a1a1a;">25-10-14</div>
<div style="left:129px;top:499px;width:1px;height:28px;background:#bdbdbd"></div>
<div style="left:130px;top:500px;width:169px;height:27px;background:#f0f0f0;line-height:27px;text-align:center;color:#007a00;"><span class="c">中国</span> U23</div>
<div style="left:299px;top:499px;width:1px;height:28px;background:#bdbdbd"></div>
<div style="left:300px;top:500px;width:75px;height:27px;background:#f0f0f0;line-height:27px;text-align:center;color:#1a1a1a;"><span style="color:#ff0000">0-0</span>(0-0)</div>
<div style="left:375px;top:499px;width:1px;height:28px;background:#bdbdbd"></div>
<div style="left:376px;top:500px;width:34px;height:27px;background:#f0f0f0;line-height:27px;text-align:center;color:#1a1a1a;">9-3</div>
<div style="left:410px;top:499px;width:1px;height:28px;background:#bdbdbd"></div>
<div style="left:411px;top:500px;width:80px;height:27px;background:#f0f0f0;line-height:27px;text-align:center;color:#1a1a1a;"><span class="c">泰国</span> U23</div>
<div style="left:491px;top:499px;width:1px;height:28px;background:#bdbdbd"></div>
<div style="left:492px;top:500px;width:34px;height:27px;background:#fdf9f6;line-height:27px;text-align:center;color:#1a1a1a;"></div>
<div style="left:526px;top:499px;width:1px;height:28px;background:#bdbdbd"></div>
<div style="left:527px;top:500px;width:63px;height:27px;background:#fdf9f6;line-height:27px;text-align:center;color:#1a1a1a;"></div>
<div style="left:590px;top:499px;width:1px;height:28px;background:#bdbdbd"></div>
<div style="left:591px;top:500px;width:34px;height:27px;background:#fdf9f6;line-height:27px;text-align:center;color:#1a1a1a;"></div>
<div style="left:625px;top:499px;width:1px;height:28px;background:#bdbdbd"></div>
<div style="left:626px;top:500px;width:49px;height:27px;background:#eff8fc;line-height:27px;text-align:center;color:#1a1a1a;">1.52</div>
<div style="left:675px;top:499px;width:1px;height:28px;background:#bdbdbd"></div>
<div style="left:676px;top:500px;width:49px;height:27px;background:#eff8fc;line-height:27px;text-align:center;color:#1a1a1a;">4.03</div>
<div style="left:725px;top:499px;width:1px;height:28px;background:#bdbdbd"></div>
<div style="left:726px;top:500px;width:63px;height:27px;background:#eff8fc;line-height:27px;text-align:center;color:#1a1a1a;">5.06</div>
<div style="left:789px;top:499px;width:1px;height:28px;background:#bdbdbd"></div>
<div style="left:790px;top:500px;width:33px;height:27px;background:#f0f0f0;line-height:27px;text-align:center;color:#0000ff;"><span class="c">平</span></div>
<div style="left:823px;top:499px;width:1px;height:28px;background:#bdbdbd"></div>
<div style="left:824px;top:500px;width:33px;height:27px;background:#f0f0f0;line-height:27px;text-align:center;color:#1a1a1a;"></div>
<div style="left:857px;top:499px;width:1px;height:28px;background:#bdbdbd"></div>
<div style="left:858px;top:500px;width:50px;height:27px;background:#f0f0f0;line-height:27px;text-align:center;color:#1a1a1a;"></div>
<div style="left:0px;top:527px;width:908px;height:1px;background:#bdbdbd"></div>
<div style="left:-2px;top:528px;width:65px;height:27px;background:#4466bb;line-height:27px;text-align:center;color:#fff;"><span class="c">国际友谊</span></div>
<div style="left:63px;top:527px;width:1px;height:28px;background:#bdbdbd"></div>
<div style="left:64px;top:528px;width:65px;height:27px;background:#fff;line-height:27px;text-align:center;color:#1a1a1a;">25-10-10</div>
<div style="left:129px;top:527px;width:1px;height:28px;background:#bdbdbd"></div>
<div style="left:130px;top:528px;width:169px;height:27px;background:#fff;line-height:27px;text-align:center;color:#007a00;"><span class="c">中国</span> U23</div>
<div style="left:299px;top:527px;width:1px;height:28px;background:#bdbdbd"></div>
<div style="left:300px;top:528px;width:75px;height:27px;background:#fff;line-height:27px;text-align:center;color:#1a1a1a;"><span style="color:#ff0000">3-1</span>(0-1)</div>
<div style="left:375px;top:527px;width:1px;height:28px;background:#bdbdbd"></div>
<div style="left:376px;top:528px;width:34px;height:27px;background:#fff;line-height:27px;text-align:center;color:#1a1a1a;">0-0</div>
<div style="left:410px;top:527px;width:1px;height:28px;background:#bdbdbd"></div>
<div style="left:411px;top:528px;width:80px;height:27px;background:#fff;line-height:27px;text-align:center;color:#1a1a1a;"><span class="c">泰国</span> U23</div>
<div style="left:491px;top:527px;width:1px;height:28px;background:#bdbdbd"></div>
<div style="left:492px;top:528px;width:34px;height:27px;background:#fdf9f6;line-height:27px;text-align:center;color:#1a1a1a;"></div>
<div style="left:526px;top:527px;width:1px;height:28px;background:#bdbdbd"></div>
<div style="left:527px;top:528px;width:63px;height:27px;background:#fdf9f6;line-height:27px;text-align:center;color:#1a1a1a;"></div>
<div style="left:590px;top:527px;width:1px;height:28px;background:#bdbdbd"></div>
<div style="left:591px;top:528px;width:34px;height:27px;background:#fdf9f6;line-height:27px;text-align:center;color:#1a1a1a;"></div>
<div style="left:625px;top:527px;width:1px;height:28px;background:#bdbdbd"></div>
<div style="left:626px;top:528px;width:49px;height:27px;background:#eff8fc;line-height:27px;text-align:center;color:#1a1a1a;"></div>
<div style="left:675px;top:527px;width:1px;height:28px;background:#bdbdbd"></div>
<div style="left:676px;top:528px;width:49px;height:27px;background:#eff8fc;line-height:27px;text-align:center;color:#1a1a1a;"></div>
<div style="left:725px;top:527px;width:1px;height:28px;background:#bdbdbd"></div>
<div style="left:726px;top:528px;width:63px;height:27px;background:#eff8fc;line-height:27px;text-align:center;color:#1a1a1a;"></div>
<div style="left:789px;top:527px;width:1px;height:28px;background:#bdbdbd"></div>
<div style="left:790px;top:528px;width:33px;height:27px;background:#fff;line-height:27px;text-align:center;color:#ff0000;"><span class="c">勝</span></div>
<div style="left:823px;top:527px;width:1px;height:28px;background:#bdbdbd"></div>
<div style="left:824px;top:528px;width:33px;height:27px;background:#fff;line-height:27px;text-align:center;color:#1a1a1a;"></div>
<div style="left:857px;top:527px;width:1px;height:28px;background:#bdbdbd"></div>
<div style="left:858px;top:528px;width:50px;height:27px;background:#fff;line-height:27px;text-align:center;color:#1a1a1a;"></div>
<div style="left:0px;top:555px;width:908px;height:1px;background:#bdbdbd"></div>
<div style="left:-2px;top:556px;width:65px;height:27px;background:#cc9900;line-height:27px;text-align:center;color:#fff;"><span class="c">亚青</span>U23</div>
<div style="left:63px;top:555px;width:1px;height:28px;background:#bdbdbd"></div>
<div style="left:64px;top:556px;width:65px;height:27px;background:#f0f0f0;line-height:27px;text-align:center;color:#1a1a1a;">25-09-09</div>
<div style="left:129px;top:555px;width:1px;height:28px;background:#bdbdbd"></div>
<div style="left:130px;top:556px;width:169px;height:27px;background:#f0f0f0;line-height:27px;text-align:center;color:#1a1a1a;"><span class="c">澳大利亚</span> U23(<span class="c">中</span>)</div>
<div style="left:299px;top:555px;width:1px;height:28px;background:#bdbdbd"></div>
<div style="left:300px;top:556px;width:75px;height:27px;background:#f0f0f0;line-height:27px;text-align:center;color:#1a1a1a;"><span style="color:#ff0000">0-0</span>(0-0)</div>
<div style="left:375px;top:555px;width:1px;height:28px;background:#bdbdbd"></div>
<div style="left:376px;top:556px;width:34px;height:27px;background:#f0f0f0;line-height:27px;text-align:center;color:#1a1a1a;">9-0</div>
<div style="left:410px;top:555px;width:1px;height:28px;background:#bdbdbd"></div>
<div style="left:411px;top:556px;width:80px;height:27px;background:#f0f0f0;line-height:27px;text-align:center;color:#007a00;"><span class="c">中国</span> U23</div>
<div style="left:491px;top:555px;width:1px;height:28px;background:#bdbdbd"></div>
<div style="left:492px;top:556px;width:34px;height:27px;background:#fdf9f6;line-height:27px;text-align:center;color:#1a1a1a;">0.89</div>
<div style="left:526px;top:555px;width:1px;height:28px;background:#bdbdbd"></div>
<div style="left:527px;top:556px;width:63px;height:27px;background:#fdf9f6;line-height:27px;text-align:center;color:#1a1a1a;"><span class="c">一球</span></div>
<div style="left:590px;top:555px;width:1px;height:28px;background:#bdbdbd"></div>
<div style="left:591px;top:556px;width:34px;height:27px;background:#fdf9f6;line-height:27px;text-align:center;color:#1a1a1a;">0.81</div>
<div style="left:625px;top:555px;width:1px;height:28px;background:#bdbdbd"></div>
<div style="left:626px;top:556px;width:49px;height:27px;background:#eff8fc;line-height:27px;text-align:center;color:#1a1a1a;">1.52</div>
<div style="left:675px;top:555px;width:1px;height:28px;background:#bdbdbd"></div>
<div style="left:676px;top:556px;width:49px;height:27px;background:#eff8fc;line-height:27px;text-align:center;color:#1a1a1a;">3.72</div>
<div style="left:725px;top:555px;width:1px;height:28px;background:#bdbdbd"></div>
<div style="left:726px;top:556px;width:63px;height:27px;background:#eff8fc;line-height:27px;text-align:center;color:#1a1a1a;">5.62</div>
<div style="left:789px;top:555px;width:1px;height:28px;background:#bdbdbd"></div>
<div style="left:790px;top:556px;width:33px;height:27px;background:#f0f0f0;line-height:27px;text-align:center;color:#0000ff;"><span class="c">平</span></div>
<div style="left:823px;top:555px;width:1px;height:28px;background:#bdbdbd"></div>
<div style="left:824px;top:556px;width:33px;height:27px;background:#f0f0f0;line-height:27px;text-align:center;color:#ff0000;"><span class="c">贏</span></div>
<div style="left:857px;top:555px;width:1px;height:28px;background:#bdbdbd"></div>
<div style="left:858px;top:556px;width:50px;height:27px;background:#f0f0f0;line-height:27px;text-align:center;color:#007a00;"><span class="c">小</span></div>
<div style="left:0px;top:583px;width:908px;height:1px;background:#bdbdbd"></div>
<div style="left:-2px;top:584px;width:65px;height:27px;background:#cc9900;line-height:27px;text-align:center;color:#fff;"><span class="c">亚青</span>U23</div>
<div style="left:63px;top:583px;width:1px;height:28px;background:#bdbdbd"></div>
<div style="left:64px;top:584px;width:65px;height:27px;background:#fff;line-height:27px;text-align:center;color:#1a1a1a;">25-09-06</div>
<div style="left:129px;top:583px;width:1px;height:28px;background:#bdbdbd"></div>
<div style="left:130px;top:584px;width:169px;height:27px;background:#fff;line-height:27px;text-align:center;color:#1a1a1a;"><span class="c">北马里亚纳群岛</span> U23(<span class="c">中</span>)</div>
<div style="left:299px;top:583px;width:1px;height:28px;background:#bdbdbd"></div>
<div style="left:300px;top:584px;width:75px;height:27px;background:#fff;line-height:27px;text-align:center;color:#1a1a1a;"><span style="color:#ff0000">0-10</span>(0-1)</div>
<div style="left:375px;top:583px;width:1px;height:28px;background:#bdbdbd"></div>
<div style="left:376px;top:584px;width:34px;height:27px;background:#fff;line-height:27px;text-align:center;color:#1a1a1a;">0-12</div>
<div style="left:410px;top:583px;width:1px;height:28px;background:#bdbdbd"></div>
<div style="left:411px;top:584px;width:80px;height:27px;background:#fff;line-height:27px;text-align:center;color:#007a00;"><span class="c">中国</span> U23</div>
<div style="left:491px;top:583px;width:1px;height:28px;background:#bdbdbd"></div>
<div style="left:492px;top:584px;width:34px;height:27px;background:#fdf9f6;line-height:27px;text-align:center;color:#1a1a1a;"></div>
<div style="left:526px;top:583px;width:1px;height:28px;background:#bdbdbd"></div>
<div style="left:527px;top:584px;width:63px;height:27px;background:#fdf9f6;line-height:27px;text-align:center;color:#1a1a1a;"></div>
<div style="left:590px;top:583px;width:1px;height:28px;background:#bdbdbd"></div>
<div style="left:591px;top:584px;width:34px;height:27px;background:#fdf9f6;line-height:27px;text-align:center;color:#1a1a1a;"></div>
<div style="left:625px;top:583px;width:1px;height:28px;background:#bdbdbd"></div>
<div style="left:626px;top:584px;width:49px;height:27px;background:#eff8fc;line-height:27px;text-align:center;color:#1a1a1a;"></div>
<div style="left:675px;top:583px;width:1px;height:28px;background:#bdbdbd"></div>
<div style="left:676px;top:584px;width:49px;height:27px;background:#eff8fc;line-height:27px;text-align:center;color:#1a1a1a;"></div>
<div style="left:725px;top:583px;width:1px;height:28px;background:#bdbdbd"></div>
<div style="left:726px;top:584px;width:63px;height:27px;background:#eff8fc;line-height:27px;text-align:center;color:#1a1a1a;"></div>
<div style="left:789px;top:583px;width:1px;height:28px;background:#bdbdbd"></div>
<div style="left:790px;top:584px;width:33px;height:27px;background:#fff;line-height:27px;text-align:center;color:#ff0000;"><span class="c">勝</span></div>
<div style="left:823px;top:583px;width:1px;height:28px;background:#bdbdbd"></div>
<div style="left:824px;top:584px;width:33px;height:27px;background:#fff;line-height:27px;text-align:center;color:#1a1a1a;"></div>
<div style="left:857px;top:583px;width:1px;height:28px;background:#bdbdbd"></div>
<div style="left:858px;top:584px;width:50px;height:27px;background:#fff;line-height:27px;text-align:center;color:#1a1a1a;"></div>
<div style="left:0px;top:611px;width:908px;height:1px;background:#bdbdbd"></div>
<div style="left:-2px;top:612px;width:65px;height:27px;background:#cc9900;line-height:27px;text-align:center;color:#fff;"><span class="c">亚青</span>U23</div>
<div style="left:63px;top:611px;width:1px;height:28px;background:#bdbdbd"></div>
<div style="left:64px;top:612px;width:65px;height:27px;background:#f0f0f0;line-height:27px;text-align:center;color:#1a1a1a;">25-09-03</div>
<div style="left:129px;top:611px;width:1px;height:28px;background:#bdbdbd"></div>
<div style="left:130px;top:612px;width:169px;height:27px;background:#f0f0f0;line-height:27px;text-align:center;color:#007a00;"><span class="c">中国</span> U23</div>
<div style="left:299px;top:611px;width:1px;height:28px;background:#bdbdbd"></div>
<div style="left:300px;top:612px;width:75px;height:27px;background:#f0f0f0;line-height:27px;text-align:center;color:#1a1a1a;"><span style="color:#ff0000">2-1</span>(2-0)</div>
<div style="left:375px;top:611px;width:1px;height:28px;background:#bdbdbd"></div>
<div style="left:376px;top:612px;width:34px;height:27px;background:#f0f0f0;line-height:27px;text-align:center;color:#1a1a1a;">7-0</div>
<div style="left:410px;top:611px;width:1px;height:28px;background:#bdbdbd"></div>
<div style="left:411px;top:612px;width:80px;height:27px;background:#f0f0f0;line-height:27px;text-align:center;color:#1a1a1a;"><span class="c">东帝汶</span> U23</div>
<div style="left:491px;top:611px;width:1px;height:28px;background:#bdbdbd"></div>
<div style="left:492px;top:612px;width:34px;height:27px;background:#fdf9f6;line-height:27px;text-align:center;color:#1a1a1a;"></div>
<div style="left:526px;top:611px;width:1px;height:28px;background:#bdbdbd"></div>
<div style="left:527px;top:612px;width:63px;height:27px;background:#fdf9f6;line-height:27px;text-align:center;color:#1a1a1a;"></div>
<div style="left:590px;top:611px;width:1px;height:28px;background:#bdbdbd"></div>
<div style="left:591px;top:612px;width:34px;height:27px;background:#fdf9f6;line-height:27px;text-align:center;color:#1a1a1a;"></div>
<div style="left:625px;top:611px;width:1px;height:28px;background:#bdbdbd"></div>
<div style="left:626px;top:612px;width:49px;height:27px;background:#eff8fc;line-height:27px;text-align:center;color:#1a1a1a;"></div>
<div style="left:675px;top:611px;width:1px;height:28px;background:#bdbdbd"></div>
<div style="left:676px;top:612px;width:49px;height:27px;background:#eff8fc;line-height:27px;text-align:center;color:#1a1a1a;"></div>
<div style="left:725px;top:611px;width:1px;height:28px;background:#bdbdbd"></div>
<div style="left:726px;top:612px;width:63px;height:27px;background:#eff8fc;line-height:27px;text-align:center;color:#1a1a1a;"></div>
<div style="left:789px;top:611px;width:1px;height:28px;background:#bdbdbd"></div>
<div style="left:790px;top:612px;width:33px;height:27px;background:#f0f0f0;line-height:27px;text-align:center;color:#ff0000;"><span class="c">勝</span></div>
<div style="left:823px;top:611px;width:1px;height:28px;background:#bdbdbd"></div>
<div style="left:824px;top:612px;width:33px;height:27px;background:#f0f0f0;line-height:27px;text-align:center;color:#1a1a1a;"></div>
<div style="left:857px;top:611px;width:1px;height:28px;background:#bdbdbd"></div>
<div style="left:858px;top:612px;width:50px;height:27px;background:#f0f0f0;line-height:27px;text-align:center;color:#1a1a1a;"></div>
<div style="left:0px;top:639px;width:908px;height:1px;background:#bdbdbd"></div>
<div style="left:-2px;top:640px;width:65px;height:27px;background:#cc9900;line-height:27px;text-align:center;color:#fff;"><span class="c">亚青</span>U23</div>
<div style="left:63px;top:639px;width:1px;height:28px;background:#bdbdbd"></div>
<div style="left:64px;top:640px;width:65px;height:27px;background:#fff;line-height:27px;text-align:center;color:#1a1a1a;">24-04-22</div>
<div style="left:129px;top:639px;width:1px;height:28px;background:#bdbdbd"></div>
<div style="left:130px;top:640px;width:169px;height:27px;background:#fff;line-height:27px;text-align:center;color:#1a1a1a;"><span class="c">阿联酋</span> U23(<span class="c">中</span>)</div>
<div style="left:299px;top:639px;width:1px;height:28px;background:#bdbdbd"></div>
<div style="left:300px;top:640px;width:75px;height:27px;background:#fff;line-height:27px;text-align:center;color:#1a1a1a;"><span style="color:#ff0000">1-2</span>(0-2)</div>
<div style="left:375px;top:639px;width:1px;height:28px;background:#bdbdbd"></div>
<div style="left:376px;top:640px;width:34px;height:27px;background:#fff;line-height:27px;text-align:center;color:#1a1a1a;">9-7</div>
<div style="left:410px;top:639px;width:1px;height:28px;background:#bdbdbd"></div>
<div style="left:411px;top:640px;width:80px;height:27px;background:#fff;line-height:27px;text-align:center;color:#007a00;"><span class="c">中国</span> U23</div>
<div style="left:491px;top:639px;width:1px;height:28px;background:#bdbdbd"></div>
<div style="left:492px;top:640px;width:34px;height:27px;background:#fdf9f6;line-height:27px;text-align:center;color:#1a1a1a;">1.07</div>
<div style="left:526px;top:639px;width:1px;height:28px;background:#bdbdbd"></div>
<div style="left:527px;top:640px;width:63px;height:27px;background:#fdf9f6;line-height:27px;text-align:center;color:#1a1a1a;"><span class="c">平手</span></div>
<div style="left:590px;top:639px;width:1px;height:28px;background:#bdbdbd"></div>
<div style="left:591px;top:640px;width:34px;height:27px;background:#fdf9f6;line-height:27px;text-align:center;color:#1a1a1a;">0.75</div>
<div style="left:625px;top:639px;width:1px;height:28px;background:#bdbdbd"></div>
<div style="left:626px;top:640px;width:49px;height:27px;background:#eff8fc;line-height:27px;text-align:center;color:#1a1a1a;">2.96</div>
<div style="left:675px;top:639px;width:1px;height:28px;background:#bdbdbd"></div>
<div style="left:676px;top:640px;width:49px;height:27px;background:#eff8fc;line-height:27px;text-align:center;color:#1a1a1a;">2.93</div>
<div style="left:725px;top:639px;width:1px;height:28px;background:#bdbdbd"></div>
<div style="left:726px;top:640px;width:63px;height:27px;background:#eff8fc;line-height:27px;text-align:center;color:#1a1a1a;">2.38</div>
<div style="left:789px;top:639px;width:1px;height:28px;background:#bdbdbd"></div>
<div style="left:790px;top:640px;width:33px;height:27px;background:#fff;line-height:27px;text-align:center;color:#ff0000;"><span class="c">勝</span></div>
<div style="left:823px;top:639px;width:1px;height:28px;background:#bdbdbd"></div>
<div style="left:824px;top:640px;width:33px;height:27px;background:#fff;line-height:27px;text-align:center;color:#ff0000;"><span class="c">贏</span></div>
<div style="left:857px;top:639px;width:1px;height:28px;background:#bdbdbd"></div>
<div style="left:858px;top:640px;width:50px;height:27px;background:#fff;line-height:27px;text-align:center;color:#ff0000;"><span class="c">大</span></div>
<div style="left:0px;top:667px;width:908px;height:1px;background:#bdbdbd"></div>
<div style="left:-2px;top:668px;width:65px;height:27px;background:#cc9900;line-height:27px;text-align:center;color:#fff;"><span class="c">亚青</span>U23</div>
<div style="left:63px;top:667px;width:1px;height:28px;background:#bdbdbd"></div>
<div style="left:64px;top:668px;width:65px;height:27px;background:#f0f0f0;line-height:27px;text-align:center;color:#1a1a1a;">24-04-19</div>
<div style="left:129px;top:667px;width:1px;height:28px;background:#bdbdbd"></div>
<div style="left:130px;top:668px;width:169px;height:27px;background:#f0f0f0;line-height:27px;text-align:center;color:#007a00;"><span class="c">中国</span> U23(<span class="c">中</span>)</div>
<div style="left:299px;top:667px;width:1px;height:28px;background:#bdbdbd"></div>
<div style="left:300px;top:668px;width:75px;height:27px;background:#f0f0f0;line-height:27px;text-align:center;color:#1a1a1a;"><span style="color:#ff0000">0-2</span>(0-1)</div>
<div style="left:375px;top:667px;width:1px;height:28px;background:#bdbdbd"></div>
<div style="left:376px;top:668px;width:34px;height:27px;background:#f0f0f0;line-height:27px;text-align:center;color:#1a1a1a;">0-7</div>
<div style="left:410px;top:667px;width:1px;height:28px;background:#bdbdbd"></div>
<div style="left:411px;top:668px;width:80px;height:27px;background:#f0f0f0;line-height:27px;text-align:center;color:#1a1a1a;"><span class="c">韩国</span> U23</div>
<div style="left:491px;top:667px;width:1px;height:28px;background:#bdbdbd"></div>
<div style="left:492px;top:668px;width:34px;height:27px;background:#fdf9f6;line-height:27px;text-align:center;color:#1a1a1a;">0.90</div>
<div style="left:526px;top:667px;width:1px;height:28px;background:#bdbdbd"></div>
<div style="left:527px;top:668px;width:63px;height:27px;background:#fdf9f6;line-height:27px;text-align:center;color:#1a1a1a;"><span style="color:#ff0000">*</span><span class="c">一</span>/<span class="c">球半</span></div>
<div style="left:590px;top:667px;width:1px;height:28px;background:#bdbdbd"></div>
<div style="left:591px;top:668px;width:34px;height:27px;background:#fdf9f6;line-height:27px;text-align:center;color:#1a1a1a;">0.92</div>
<div style="left:625px;top:667px;width:1px;height:28px;background:#bdbdbd"></div>
<div style="left:626px;top:668px;width:49px;height:27px;background:#eff8fc;line-height:27px;text-align:center;color:#1a1a1a;">7.85</div>
<div style="left:675px;top:667px;width:1px;height:28px;background:#bdbdbd"></div>
<div style="left:676px;top:668px;width:49px;height:27px;background:#eff8fc;line-height:27px;text-align:center;color:#1a1a1a;">4.34</div>
<div style="left:725px;top:667px;width:1px;height:28px;background:#bdbdbd"></div>
<div style="left:726px;top:668px;width:63px;height:27px;background:#eff8fc;line-height:27px;text-align:center;color:#1a1a1a;">1.35</div>
<div style="left:789px;top:667px;width:1px;height:28px;background:#bdbdbd"></div>
<div style="left:790px;top:668px;width:33px;height:27px;background:#f0f0f0;line-height:27px;text-align:center;color:#007a00;"><span class="c">負</span></div>
<div style="left:823px;top:667px;width:1px;height:28px;background:#bdbdbd"></div>
<div style="left:824px;top:668px;width:33px;height:27px;background:#f0f0f0;line-height:27px;text-align:center;color:#007a00;"><span class="c">輸</span></div>
<div style="left:857px;top:667px;width:1px;height:28px;background:#bdbdbd"></div>
<div style="left:858px;top:668px;width:50px;height:27px;background:#f0f0f0;line-height:27px;text-align:center;color:#007a00;"><span class="c">小</span></div>
<div style="left:0px;top:695px;width:908px;height:1px;background:#bdbdbd"></div>
<div style="left:-2px;top:696px;width:65px;height:27px;background:#cc9900;line-height:27px;text-align:center;color:#fff;"><span class="c">亚青</span>U23</div>
<div style="left:63px;top:695px;width:1px;height:28px;background:#bdbdbd"></div>
<div style="left:64px;top:696px;width:65px;height:27px;background:#fff;line-height:27px;text-align:center;color:#1a1a1a;">24-04-16</div>
<div style="left:129px;top:695px;width:1px;height:28px;background:#bdbdbd"></div>
<div style="left:130px;top:696px;width:169px;height:27px;background:#fff;line-height:27px;text-align:center;color:#1a1a1a;"><b class="rc">1</b><span class="c">日本</span> U23(<span class="c">中</span>)</div>
<div style="left:299px;top:695px;width:1px;height:28px;background:#bdbdbd"></div>
<div style="left:300px;top:696px;width:75px;height:27px;background:#fff;line-height:27px;text-align:center;color:#1a1a1a;"><span style="color:#ff0000">1-0</span>(1-0)</div>
<div style="left:375px;top:695px;width:1px;height:28px;background:#bdbdbd"></div>
<div style="left:376px;top:696px;width:34px;height:27px;background:#fff;line-height:27px;text-align:center;color:#1a1a1a;">4-6</div>
<div style="left:410px;top:695px;width:1px;height:28px;background:#bdbdbd"></div>
<div style="left:411px;top:696px;width:80px;height:27px;background:#fff;line-height:27px;text-align:center;color:#007a00;"><span class="c">中国</span> U23</div>
<div style="left:491px;top:695px;width:1px;height:28px;background:#bdbdbd"></div>
<div style="left:492px;top:696px;width:34px;height:27px;background:#fdf9f6;line-height:27px;text-align:center;color:#1a1a1a;">0.83</div>
<div style="left:526px;top:695px;width:1px;height:28px;background:#bdbdbd"></div>
<div style="left:527px;top:696px;width:63px;height:27px;background:#fdf9f6;line-height:27px;text-align:center;color:#1a1a1a;"><span class="c">球半</span></div>
<div style="left:590px;top:695px;width:1px;height:28px;background:#bdbdbd"></div>
<div style="left:591px;top:696px;width:34px;height:27px;background:#fdf9f6;line-height:27px;text-align:center;color:#1a1a1a;">0.99</div>
<div style="left:625px;top:695px;width:1px;height:28px;background:#bdbdbd"></div>
<div style="left:626px;top:696px;width:49px;height:27px;background:#eff8fc;line-height:27px;text-align:center;color:#1a1a1a;">1.21</div>
<div style="left:675px;top:695px;width:1px;height:28px;background:#bdbdbd"></div>
<div style="left:676px;top:696px;width:49px;height:27px;background:#eff8fc;line-height:27px;text-align:center;color:#1a1a1a;">5.75</div>
<div style="left:725px;top:695px;width:1px;height:28px;background:#bdbdbd"></div>
<div style="left:726px;top:696px;width:63px;height:27px;background:#eff8fc;line-height:27px;text-align:center;color:#1a1a1a;">10.78</div>
<div style="left:789px;top:695px;width:1px;height:28px;background:#bdbdbd"></div>
<div style="left:790px;top:696px;width:33px;height:27px;background:#fff;line-height:27px;text-align:center;color:#007a00;"><span class="c">負</span></div>
<div style="left:823px;top:695px;width:1px;height:28px;background:#bdbdbd"></div>
<div style="left:824px;top:696px;width:33px;height:27px;background:#fff;line-height:27px;text-align:center;color:#ff0000;"><span class="c">贏</span></div>
<div style="left:857px;top:695px;width:1px;height:28px;background:#bdbdbd"></div>
<div style="left:858px;top:696px;width:50px;height:27px;background:#fff;line-height:27px;text-align:center;color:#007a00;"><span class="c">小</span></div>
<div style="left:0px;top:723px;width:908px;height:1px;background:#bdbdbd"></div>
<div style="left:-2px;top:724px;width:65px;height:27px;background:#4466bb;line-height:27px;text-align:center;color:#fff;"><span class="c">国际友谊</span></div>
<div style="left:63px;top:723px;width:1px;height:28px;background:#bdbdbd"></div>
<div style="left:64px;top:724px;width:65px;height:27px;background:#f0f0f0;line-height:27px;text-align:center;color:#1a1a1a;">24-04-02</div>
<div style="left:129px;top:723px;width:1px;height:28px;background:#bdbdbd"></div>
<div style="left:130px;top:724px;width:169px;height:27px;background:#f0f0f0;line-height:27px;text-align:center;color:#1a1a1a;"><span class="c">卡塔尔</span> U23</div>
<div style="left:299px;top:723px;width:1px;height:28px;background:#bdbdbd"></div>
<div style="left:300px;top:724px;width:75px;height:27px;background:#f0f0f0;line-height:27px;text-align:center;color:#1a1a1a;"><span style="color:#ff0000">0-2</span>(0-0)</div>
<div style="left:375px;top:723px;width:1px;height:28px;background:#bdbdbd"></div>
<div style="left:376px;top:724px;width:34px;height:27px;background:#f0f0f0;line-height:27px;text-align:center;color:#1a1a1a;">0-0</div>
<div style="left:410px;top:723px;width:1px;height:28px;background:#bdbdbd"></div>
<div style="left:411px;top:724px;width:80px;height:27px;background:#f0f0f0;line-height:27px;text-align:center;color:#007a00;"><span class="c">中国</span> U23</div>
<div style="left:491px;top:723px;width:1px;height:28px;background:#bdbdbd"></div>
<div style="left:492px;top:724px;width:34px;height:27px;background:#fdf9f6;line-height:27px;text-align:center;color:#1a1a1a;">1.00</div>
<div style="left:526px;top:723px;width:1px;height:28px;background:#bdbdbd"></div>
<div style="left:527px;top:724px;width:63px;height:27px;background:#fdf9f6;line-height:27px;text-align:center;color:#1a1a1a;"><span class="c">平</span>/<span class="c">半</span></div>
<div style="left:590px;top:723px;width:1px;height:28px;background:#bdbdbd"></div>
<div style="left:591px;top:724px;width:34px;height:27px;background:#fdf9f6;line-height:27px;text-align:center;color:#1a1a1a;">0.82</div>
<div style="left:625px;top:723px;width:1px;height:28px;background:#bdbdbd"></div>
<div style="left:626px;top:724px;width:49px;height:27px;background:#eff8fc;line-height:27px;text-align:center;color:#1a1a1a;">2.28</div>
<div style="left:675px;top:723px;width:1px;height:28px;background:#bdbdbd"></div>
<div style="left:676px;top:724px;width:49px;height:27px;background:#eff8fc;line-height:27px;text-align:center;color:#1a1a1a;">3.12</div>
<div style="left:725px;top:723px;width:1px;height:28px;background:#bdbdbd"></div>
<div style="left:726px;top:724px;width:63px;height:27px;background:#eff8fc;line-height:27px;text-align:center;color:#1a1a1a;">2.93</div>
<div style="left:789px;top:723px;width:1px;height:28px;background:#bdbdbd"></div>
<div style="left:790px;top:724px;width:33px;height:27px;background:#f0f0f0;line-height:27px;text-align:center;color:#ff0000;"><span class="c">勝</span></div>
<div style="left:823px;top:723px;width:1px;height:28px;background:#bdbdbd"></div>
<div style="left:824px;top:724px;width:33px;height:27px;background:#f0f0f0;line-height:27px;text-align:center;color:#ff0000;"><span class="c">贏</span></div>
<div style="left:857px;top:723px;width:1px;height:28px;background:#bdbdbd"></div>
<div style="left:858px;top:724px;width:50px;height:27px;background:#f0f0f0;line-height:27px;text-align:center;color:#0000ff;"><span class="c">走</span></div>
<div style="left:0px;top:751px;width:908px;height:1px;background:#bdbdbd"></div>
<div class="nt" style="left:19px;top:413px;font-weight:bold;font-size:13px;line-height:16px;color:#333;letter-spacing:0"><span class="c">中国</span> U23</div>
<div style="left:318px;top:414px;line-height:16px;color:#2a2a2a"><span class="c">近</span></div>
<div style="left:334px;top:412px;width:36px;height:16px;background:#fff;border:1px solid #a6a6a6;border-radius:2px;box-sizing:border-box;line-height:17px;padding-left:4px;font-size:11px;color:#000">10<span class="arr" style="left:22px;top:4px"></span></div>
<div style="left:374px;top:414px;line-height:16px;color:#2a2a2a"><span class="c">场</span></div>
<div style="left:390px;top:415px;width:12px;height:12px;background:#e4e4e4;border:1px solid #a9a9a9;border-radius:3px;box-sizing:border-box;"></div>
<div style="left:407px;top:414px;line-height:16px;color:#2a2a2a"><span class="c">同客</span></div>
<div style="left:435px;top:415px;width:12px;height:12px;background:#e4e4e4;border:1px solid #a9a9a9;border-radius:3px;box-sizing:border-box;"><svg width="10" height="10" style="position:absolute;left:0;top:0"><path d="M1.5 5.4 L3.9 8.1 L8.6 1.8" fill="none" stroke="#3a3a3a" stroke-width="2.4"/></svg></div>
<div style="left:447px;top:414px;line-height:16px;color:#2a2a2a"><span class="c">国际友谊</span></div>
<div style="left:497px;top:415px;width:12px;height:12px;background:#e4e4e4;border:1px solid #a9a9a9;border-radius:3px;box-sizing:border-box;"><svg width="10" height="10" style="position:absolute;left:0;top:0"><path d="M1.5 5.4 L3.9 8.1 L8.6 1.8" fill="none" stroke="#3a3a3a" stroke-width="2.4"/></svg></div>
<div style="left:508px;top:414px;line-height:16px;color:#2a2a2a"><span class="c">亚青</span>U23</div>
<div style="left:556px;top:415px;width:12px;height:12px;background:#e4e4e4;border:1px solid #a9a9a9;border-radius:3px;box-sizing:border-box;"><svg width="10" height="10" style="position:absolute;left:0;top:0"><path d="M1.5 5.4 L3.9 8.1 L8.6 1.8" fill="none" stroke="#3a3a3a" stroke-width="2.4"/></svg></div>
<div style="left:567px;top:414px;line-height:16px;color:#2a2a2a"><span class="c">亚运男足</span></div>
<div style="left:617px;top:415px;width:12px;height:12px;background:#e4e4e4;border:1px solid #a9a9a9;border-radius:3px;box-sizing:border-box;"><svg width="10" height="10" style="position:absolute;left:0;top:0"><path d="M1.5 5.4 L3.9 8.1 L8.6 1.8" fill="none" stroke="#3a3a3a" stroke-width="2.4"/></svg></div>
<div style="left:628px;top:414px;line-height:16px;color:#2a2a2a"><span class="c">奥选赛</span></div>
<div style="left:503px;top:57px;width:59px;height:20px;background:#fff;border:1px solid #a6a6a6;border-radius:2px;box-sizing:border-box;line-height:18px;padding-left:4px;font-size:13px;color:#000">Crow*<span class="arr" style="left:45px;top:6px"></span></div>
<div style="left:570px;top:57px;width:36px;height:20px;background:#fff;border:1px solid #a6a6a6;border-radius:2px;box-sizing:border-box;line-height:18px;padding-left:4px;font-size:13px;color:#000"><span class="c">终</span><span class="arr" style="left:22px;top:6px"></span></div>
<div style="left:641px;top:57px;width:84px;height:20px;background:#fff;border:1px solid #a6a6a6;border-radius:2px;box-sizing:border-box;line-height:18px;padding-left:4px;font-size:13px;color:#000"><span class="c">胜平负均值</span><span class="arr" style="left:70px;top:6px"></span></div>
<div style="left:733px;top:57px;width:36px;height:20px;background:#fff;border:1px solid #a6a6a6;border-radius:2px;box-sizing:border-box;line-height:18px;padding-left:4px;font-size:13px;color:#000"><span class="c">终</span><span class="arr" style="left:22px;top:6px"></span></div>
<div style="left:824px;top:57px;width:48px;height:20px;background:#fff;border:1px solid #a6a6a6;border-radius:2px;box-sizing:border-box;line-height:18px;padding-left:4px;font-size:13px;color:#000"><span class="c">全场</span><span class="arr" style="left:34px;top:6px"></span></div>
<div style="left:507px;top:432px;width:59px;height:20px;background:#fff;border:1px solid #a6a6a6;border-radius:2px;box-sizing:border-box;line-height:18px;padding-left:4px;font-size:13px;color:#000">Crow*<span class="arr" style="left:45px;top:6px"></span></div>
<div style="left:574px;top:432px;width:36px;height:20px;background:#fff;border:1px solid #a6a6a6;border-radius:2px;box-sizing:border-box;line-height:18px;padding-left:4px;font-size:13px;color:#000"><span class="c">终</span><span class="arr" style="left:22px;top:6px"></span></div>
<div style="left:643px;top:432px;width:84px;height:20px;background:#fff;border:1px solid #a6a6a6;border-radius:2px;box-sizing:border-box;line-height:18px;padding-left:4px;font-size:13px;color:#000"><span class="c">胜平负均值</span><span class="arr" style="left:70px;top:6px"></span></div>
<div style="left:735px;top:432px;width:36px;height:20px;background:#fff;border:1px solid #a6a6a6;border-radius:2px;box-sizing:border-box;line-height:18px;padding-left:4px;font-size:13px;color:#000"><span class="c">终</span><span class="arr" style="left:22px;top:6px"></span></div>
<div style="left:825px;top:432px;width:48px;height:20px;background:#fff;border:1px solid #a6a6a6;border-radius:2px;box-sizing:border-box;line-height:18px;padding-left:4px;font-size:13px;color:#000"><span class="c">全场</span><span class="arr" style="left:34px;top:6px"></span></div>
<div style="left:276px;top:382px;line-height:18px;letter-spacing:0"><span class="c">近</span><span style="color:#f00">10</span><span class="c">场</span>,<span class="c">胜</span>4<span class="c">平</span>2<span class="c">负</span>4,</div>
<div style="left:383px;top:382px;line-height:18px;letter-spacing:0"><span class="c">胜率</span>:<span class="bl">40%</span></div>
<div style="left:441px;top:382px;line-height:18px;letter-spacing:0"><span class="c">赢率</span>:<span class="bl">33.3%</span></div>
<div style="left:510px;top:382px;line-height:18px;letter-spacing:0"><span class="c">大</span>:</div>
<div style="left:526px;top:381px;width:47px;height:18px;background:#008000;color:#fff;line-height:20px;text-align:center;letter-spacing:0">16.6%</div>
<div style="left:577px;top:382px;line-height:18px;letter-spacing:0"><span class="c">单率</span>:<span class="bl">40%</span></div>
<div style="left:0px;top:404px;width:908px;height:1px;background:#bdbdbd"></div>
</body></html>
